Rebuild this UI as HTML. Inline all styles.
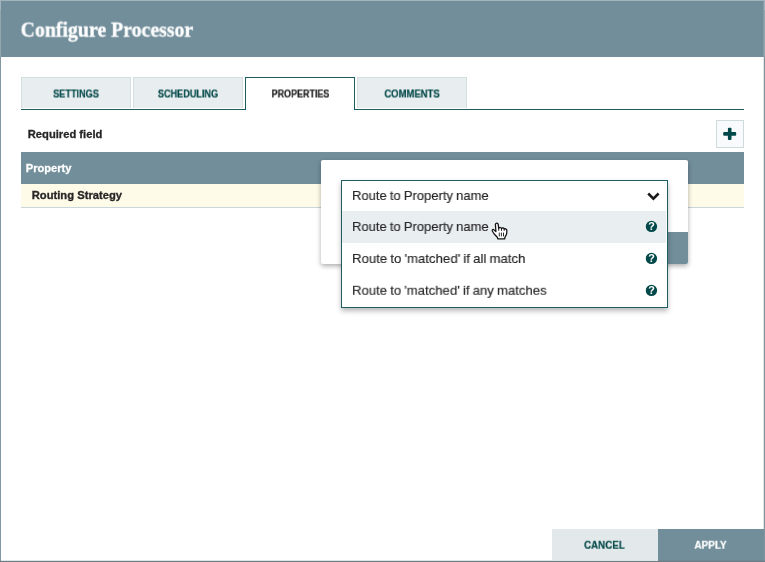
<!DOCTYPE html>
<html>
<head>
<meta charset="utf-8">
<title>Configure Processor</title>
<style>
html,body{margin:0;padding:0;}
body{width:765px;height:562px;overflow:hidden;background:#fff;font-family:"Liberation Sans",sans-serif;position:relative;}
#dialog{position:absolute;left:0;top:0;width:765px;height:562px;background:#fff;overflow:hidden;}
#header{position:absolute;left:0;top:0;width:765px;height:57px;background:#728e9b;}
.t{position:absolute;white-space:nowrap;display:block;transform-origin:0 50%;will-change:transform;}
#title{left:21px;top:17px;-webkit-text-stroke:0.3px #fff;transform:translate(-0.4px,0.6px) scaleX(0.991);font-family:"Liberation Serif",serif;font-weight:bold;font-size:20px;line-height:24px;color:#fff;}
.tab{position:absolute;top:77px;width:110px;height:31px;box-sizing:border-box;background:#e8edef;border:1px solid #d3dee1;border-bottom:none;}
.tab.active{background:#fff;border:1px solid #1f5e60;border-bottom:none;height:33px;z-index:2;}
.tabtxt{-webkit-text-stroke-width:0.2px;font-size:11px;font-weight:bold;color:#004849;line-height:14px;top:87px;z-index:3;width:110px;text-align:center;transform-origin:50% 50%;transform:translateY(-0.5px) scaleX(0.83);}
#tabline{position:absolute;left:21px;top:109px;width:723px;height:1px;background:#1f5e60;}
#req{-webkit-text-stroke-width:0.3px;transform:translate(-0.2px,-0.3px) scaleX(1.016);left:28px;top:127px;font-size:11px;font-weight:bold;color:#262626;line-height:14px;}
#plus{position:absolute;left:716px;top:120px;width:28px;height:28px;box-sizing:border-box;border:1px solid #cfdadd;background:#f9fafb;}
#thead{position:absolute;left:21px;top:152px;width:723px;height:32px;background:#728e9b;}
#prop{-webkit-text-stroke-width:0.3px;transform:translate(-0.2px,0.2px) scaleX(1.01);left:26px;top:161px;font-size:11px;font-weight:bold;color:#fff;line-height:14px;}
#row{position:absolute;left:21px;top:184px;width:723px;height:23px;background:#fffbe9;border-bottom:1px solid #c9d5da;}
#rs{-webkit-text-stroke-width:0.3px;transform:translate(-0.3px,-0.3px) scaleX(1.02);left:32px;top:188px;font-size:11px;font-weight:bold;color:#262626;line-height:14px;}
#popup{position:absolute;left:321px;top:160px;width:367px;height:104px;background:#fff;border-radius:2px;box-shadow:0 2px 5px rgba(0,0,0,0.33);}
#okbtn{position:absolute;right:0;bottom:0;width:100px;height:32px;background:#728e9b;border-radius:0 0 2px 0;}
#combo{position:absolute;left:341px;top:180px;width:327px;height:32px;box-sizing:border-box;border:1px solid #1f5e60;background:#fff;z-index:6;}
#dshadow{position:absolute;left:341px;top:180px;width:327px;height:128px;z-index:5;box-shadow:0 3px 5px rgba(0,0,0,0.28);}
#list{position:absolute;left:341px;top:211px;width:327px;height:97px;box-sizing:border-box;border:1px solid #1f5e60;border-top:none;background:#fff;z-index:6;}
.hl{position:absolute;left:0;top:0;width:324px;height:32px;background:#e9eef0;}
.opt{word-spacing:-0.5px;-webkit-text-stroke-width:0.15px;transform:scaleX(0.953);font-size:13.5px;color:#262626;line-height:18px;left:352px;z-index:7;}
.q{position:absolute;width:14px;height:14px;z-index:8;will-change:transform;}
.btxt{-webkit-text-stroke-width:0.2px;transform:scaleX(0.85);font-size:11.5px;font-weight:bold;line-height:16px;top:537px;}
</style>
</head>
<body>
<div id="dialog">
<div id="header"></div>
<span class="t" id="title">Configure Processor</span>
<div class="tab" style="left:21px;"></div>
<div class="tab" style="left:133px;"></div>
<div class="tab active" style="left:245px;"></div>
<div class="tab" style="left:357px;"></div>
<span class="t tabtxt" id="tt1" style="left:21px;">SETTINGS</span>
<span class="t tabtxt" id="tt2" style="left:133px;">SCHEDULING</span>
<span class="t tabtxt" id="tt3" style="left:245px;color:#262626;transform:translate(0.5px,-0.5px) scaleX(0.815)">PROPERTIES</span>
<span class="t tabtxt" id="tt4" style="left:357px;transform:translate(0px,-0.5px) scaleX(0.862)">COMMENTS</span>
<div id="tabline"></div>
<span class="t" id="req">Required field</span>
<div id="plus"><svg width="26" height="26" viewBox="0 0 26 26" style="position:absolute;left:0;top:0"><rect x="10.9" y="6.7" width="3.6" height="12.4" rx="1" fill="#004849"/><rect x="6.2" y="11.1" width="13" height="3.6" rx="1" fill="#004849"/></svg></div>
<div id="thead"></div>
<span class="t" id="prop">Property</span>
<div id="row"></div>
<span class="t" id="rs">Routing Strategy</span>
<div id="popup"><div id="okbtn"><span style="display:block;text-align:center;color:#fff;font-size:11.5px;font-weight:bold;line-height:32px;">OK</span></div></div>
<div id="dshadow"></div>
<div id="combo">
<svg width="16" height="12" viewBox="0 0 16 12" style="position:absolute;left:304px;top:10px;will-change:transform"><path d="M2.2 2.5l5.2 5.2 5.2-5.2" stroke="#1a1a1a" stroke-width="2.5" fill="none"/></svg>
</div>
<div id="list"><div class="hl"></div></div>
<span class="t opt" id="o0" style="top:187px;transform:translate(0px,0px) scaleX(0.964)">Route to Property name</span>
<span class="t opt" id="o1" style="top:218px;transform:translate(0px,0px) scaleX(0.964)">Route to Property name</span>
<span class="t opt" id="o2" style="top:250px;transform:translate(0px,0px) scaleX(0.977)">Route to 'matched' if all match</span>
<span class="t opt" id="o3" style="top:282px;transform:translate(0px,-0.2px) scaleX(0.973)">Route to 'matched' if any matches</span>
<svg class="q" style="left:644px;top:219px" viewBox="0 0 14 14"><circle cx="7.43" cy="7.4" r="5.65" fill="#004849"/><text x="7.43" y="10.9" font-family="Liberation Sans, sans-serif" font-size="10.8" font-weight="bold" fill="#fff" text-anchor="middle">?</text></svg>
<svg class="q" style="left:644px;top:251px" viewBox="0 0 14 14"><circle cx="7.43" cy="7.4" r="5.65" fill="#004849"/><text x="7.43" y="10.9" font-family="Liberation Sans, sans-serif" font-size="10.8" font-weight="bold" fill="#fff" text-anchor="middle">?</text></svg>
<svg class="q" style="left:644px;top:283px" viewBox="0 0 14 14"><circle cx="7.43" cy="7.4" r="5.65" fill="#004849"/><text x="7.43" y="10.9" font-family="Liberation Sans, sans-serif" font-size="10.8" font-weight="bold" fill="#fff" text-anchor="middle">?</text></svg>
<svg id="hand" style="position:absolute;left:490px;top:221px;z-index:9" width="20" height="20" viewBox="490 221 20 20"><path d="M497.8 238.8 L497.3 237.2 L494.2 234 L492.3 231 Q492 229.6 493.4 229.4 L495.9 231.6 L495.4 224.4 Q495.6 223 496.8 223 Q498 223 498.2 224.4 L498.7 228.6 Q499 227.4 500.2 227.5 Q501.4 227.6 501.5 228.8 Q501.8 227.8 503 227.9 Q504.1 228 504.2 229.2 Q504.6 228.6 505.6 228.8 Q506.8 229.1 506.9 230.6 L506.6 234 L504.9 237.4 L504.8 238.8 Z" fill="#fff" stroke="#111" stroke-width="1.25" stroke-linejoin="round"/><path d="M499.3 232.6v3.8M501.4 232.6v3.8M503.5 232.6v3.8M498.7 228.6v2.2M501.5 228.8v2M504.2 229.2v1.6" stroke="#111" stroke-width="0.9" fill="none"/></svg>
<div id="cancel" style="position:absolute;left:552px;top:529px;width:106px;height:31px;background:#e3e8ea;"></div>
<div id="apply" style="position:absolute;left:658px;top:529px;width:107px;height:32px;background:#728e9b;"></div>
<span class="t btxt" id="bc" style="left:584px;color:#004849;transform:translate(0px,-0.3px) scaleX(0.85);">CANCEL</span>
<span class="t btxt" id="ba" style="left:694px;transform:translate(0.4px,-0.3px) scaleX(0.865);color:#fff;">APPLY</span>
<div style="position:absolute;left:0;top:0;width:1px;height:57px;background:#94a6ac;z-index:20"></div>
<div style="position:absolute;left:0;top:57px;width:1px;height:505px;background:#8299a4;z-index:20"></div>
<div style="position:absolute;left:764px;top:0;width:1px;height:57px;background:#94a6ac;z-index:20"></div>
<div style="position:absolute;left:764px;top:57px;width:1px;height:505px;background:#7e95a0;z-index:20"></div>
<div style="position:absolute;left:763px;top:57px;width:1px;height:505px;background:rgba(126,149,160,0.25);z-index:20"></div>
<div style="position:absolute;left:763px;top:0;width:1px;height:57px;background:rgba(170,185,190,0.3);z-index:20"></div>
<div style="position:absolute;left:0;top:0;width:765px;height:1px;background:#a3b4bd;z-index:22"></div>
<div style="position:absolute;left:0;top:0;width:1px;height:10px;background:#a3b4be;z-index:22"></div>
<div style="position:absolute;left:764px;top:0;width:1px;height:10px;background:#a3b4be;z-index:22"></div>
<div style="position:absolute;left:0;top:560px;width:765px;height:1px;background:rgba(102,118,126,0.2);z-index:21"></div>
<div style="position:absolute;left:0;top:561px;width:765px;height:1px;background:#6c7d86;z-index:21"></div>
</div>
</body>
</html>
